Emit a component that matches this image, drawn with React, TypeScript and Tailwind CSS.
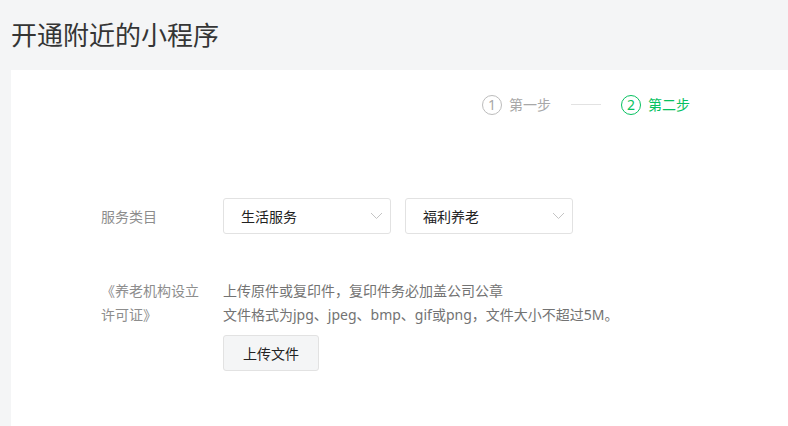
import React from "react";

const FONT = {
  fontFamily: '"Noto Sans", "Noto Sans CJK SC", sans-serif',
};

const Chevron: React.FC = () => (
  <svg width="13" height="8" viewBox="0 0 13 8" fill="none">
    <path d="M1 1l5.5 5.5L12 1" stroke="#c4c4c4" strokeWidth="1" />
  </svg>
);

const Select: React.FC<{ value: string }> = ({ value }) => (
  <div className="flex h-[36px] w-[168px] items-center justify-between rounded-[3px] border border-[#e2e2e2] bg-white pl-[17px] pr-[7px]">
    <span className="text-[14px] text-[#222]">{value}</span>
    <Chevron />
  </div>
);

const Step: React.FC<{ n: number; label: string; active?: boolean }> = ({
  n,
  label,
  active,
}) => (
  <div className="flex items-center">
    <span
      className={`flex h-[20px] w-[20px] items-center justify-center rounded-full border text-[14px] leading-none ${
        active
          ? "border-[#07c160] text-[#07c160]"
          : "border-[#bcbcbc] text-[#a8a8a8]"
      }`}
    >
      {n}
    </span>
    <span
      className={`ml-[7px] text-[14px] ${
        active ? "text-[#07c160]" : "text-[#a8a8a8]"
      }`}
    >
      {label}
    </span>
  </div>
);

export default function App() {
  return (
    <div
      className="flex min-h-[426px] flex-col bg-[#f4f5f6]"
      style={FONT}
    >
      {/* Header */}
      <div className="flex h-[70px] items-center pl-[11px]">
        <h1 className="text-[26px] font-normal text-[#353535]">
          开通附近的小程序
        </h1>
      </div>

      {/* Panel */}
      <div className="ml-[11px] flex-1 bg-white pt-[24px]">
        {/* Steps */}
        <div className="flex h-[21px] items-center justify-end pr-[98px]">
          <Step n={1} label="第一步" />
          <div className="mx-[20px] h-px w-[30px] bg-[#e2e2e2]" />
          <Step n={2} label="第二步" active />
        </div>

        <div className="mt-[83px] pl-[90px]">
          <div className="flex items-center">
            <div className="w-[122px] text-[14px] text-[#8d8d8d]">服务类目</div>
            <div className="flex gap-[14px]">
              <Select value="生活服务" />
              <Select value="福利养老" />
            </div>
          </div>

          <div className="mt-[45px] flex">
            <div className="w-[122px] pr-[20px] text-[14px] leading-[24px] text-[#8d8d8d]">
              《养老机构设立许可证》
            </div>
            <div className="flex flex-col items-start">
              <p className="text-[14px] leading-[24px] text-[#737373]">
                上传原件或复印件，复印件务必加盖公司公章
              </p>
              <p className="text-[14px] leading-[24px] text-[#737373]">
                文件格式为jpg、jpeg、bmp、gif或png，文件大小不超过5M。
              </p>
              <button className="mt-[8px] h-[36px] w-[96px] rounded-[3px] border border-[#e2e2e2] bg-[#f4f5f6] text-[14px] text-[#222]">
                上传文件
              </button>
            </div>
          </div>
        </div>
      </div>
    </div>
  );
}
